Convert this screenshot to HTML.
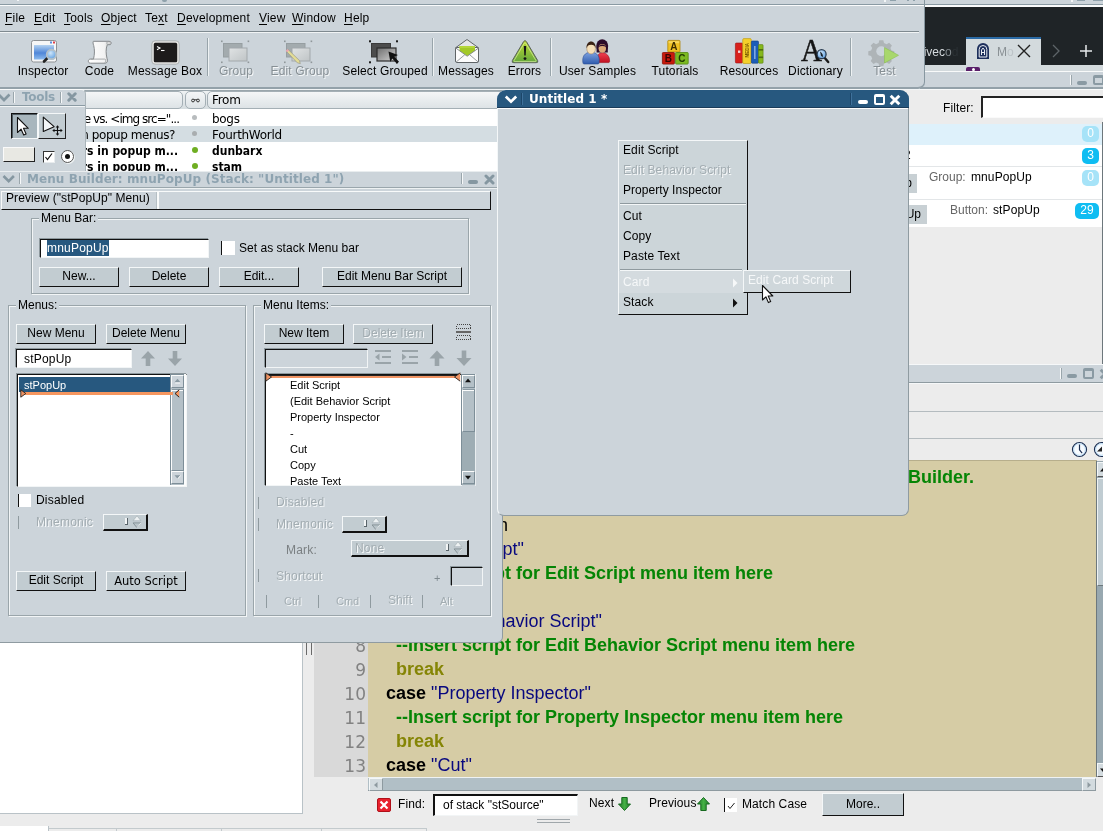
<!DOCTYPE html>
<html><head><meta charset="utf-8"><title>LiveCode</title>
<style>
*{box-sizing:border-box;margin:0;padding:0}
html,body{width:1103px;height:831px;overflow:hidden;background:#ececec;font-family:"Liberation Sans",sans-serif;font-size:12px;color:#000}
.a{position:absolute}
.dj{font-family:"DejaVu Sans",sans-serif}
.win{background:#ccd4da}
.btn{position:absolute;background:#c2ccd1;text-align:center;font-size:12px;line-height:16px;border-top:1px solid #f4f7f8;border-left:1px solid #f4f7f8;border-bottom:1px solid #111;border-right:1px solid #111;white-space:nowrap}
.opt{position:absolute;background:#c2ccd1;border-top:1px solid #f4f7f8;border-left:1px solid #f4f7f8;border-bottom:2px solid #111;border-right:2px solid #111}
.grp{position:absolute;border:1px solid #9aa5aa;box-shadow:1px 1px 0 #f2f5f6, inset 1px 1px 0 #f2f5f6}
.lbl{position:absolute;background:#ccd4da;padding:0 2px;font-size:12px;line-height:14px;white-space:nowrap}
.fld{position:absolute;background:#fff;border-top:1px solid #111;border-left:1px solid #111;border-bottom:1px solid #f2f5f6;border-right:1px solid #f2f5f6;box-shadow:-1px -1px 0 #8d989d}
.dis{color:#a3adb2;text-shadow:1px 1px 0 #f6f8f9}
.dis2{color:#868f94;text-shadow:1px 1px 0 #f6f8f9}
u{text-underline-offset:2px}
.t{position:absolute;white-space:nowrap}
</style></head><body><div id="root" style="position:absolute;left:0;top:0;width:1103px;height:831px;overflow:hidden;will-change:transform">
<!-- SECTION:BACKGROUND -->
<!-- top right: browser chrome behind -->
<div class="a" style="left:900px;top:0;width:203px;height:7px;background:#ccd4da;border-bottom:2px solid #fafbfc"></div>
<div class="a" style="left:900px;top:4px;width:203px;height:1px;background:#8a9aa3"></div>
<div class="a" style="left:1071px;top:0;width:2px;height:2px;background:#f3f6f7"></div><div class="a" style="left:1077px;top:0;width:8px;height:1px;background:#8fa1ab"></div><div class="a" style="left:1093px;top:0;width:10px;height:1px;background:#8fa1ab"></div>
<div class="a" style="left:900px;top:7px;width:203px;height:30px;background:#1f2427"></div>
<div class="a" style="left:900px;top:37px;width:203px;height:28px;background:#1f2427"></div>
<div class="t" style="left:921px;top:42px;font-size:12px;line-height:20px;color:#d5dadd">livec<span style="color:#80888c">o</span><span style="color:#2b3134">d</span></div>
<div class="a" style="left:966px;top:37px;width:75px;height:28px;background:#d3dadd;border-top:2px solid #2a6aa5"></div>
<svg class="a" style="left:976px;top:42px" width="14" height="18" viewBox="0 0 14 18"><path d="M1 17V7a6 6 0 0 1 12 0v10z" fill="#1d2f5c"/><path d="M3.2 15V7.3a3.8 3.8 0 0 1 7.6 0V15z" fill="none" stroke="#e9edf3" stroke-width="1"/><path d="M5.5 13V8l1.5-2 1.5 2v5M5.5 10.5h3" fill="none" stroke="#e9edf3" stroke-width="1"/></svg>
<div class="t" style="left:997px;top:42px;font-size:12px;line-height:20px;color:#8a9195">M<span style="color:#bcc3c7">o</span></div>
<svg class="a" style="left:1017px;top:44px" width="14" height="14" viewBox="0 0 14 14"><path d="M1 1l12 12M13 1L1 13" stroke="#222" stroke-width="1.4" fill="none"/></svg>
<svg class="a" style="left:1051px;top:43px" width="10" height="16" viewBox="0 0 10 16"><path d="M2 2l6 6-6 6" stroke="#5d6468" stroke-width="1.3" fill="none"/></svg>
<svg class="a" style="left:1079px;top:44px" width="14" height="14" viewBox="0 0 14 14"><path d="M7 1v12M1 7h12" stroke="#e6e9eb" stroke-width="1.5" fill="none"/></svg>
<div class="a" style="left:900px;top:65px;width:203px;height:6px;background:#d3dadd"></div>
<div class="a" style="left:966px;top:67px;width:14px;height:4px;background:#5a1f6a;border-radius:2px 2px 0 0"></div>
<div class="a" style="left:972px;top:68px;width:3px;height:3px;background:#fff;border-radius:2px"></div>
<!-- project browser title bar (inactive) -->
<div class="a" style="left:900px;top:71px;width:203px;height:18px;background:#ccd4da;border-top:1px solid #f8fafa;border-bottom:2px solid #93a1a9"></div>
<div class="a" style="left:900px;top:89px;width:203px;height:1px;background:#f8fafa"></div>
<div class="a" style="left:1070px;top:75px;width:2px;height:10px;background:#f6f8f9;border-right:1px solid #9aa6ac"></div>
<div class="a" style="left:1077px;top:81px;width:10px;height:4px;background:#8a9aa3;border-radius:2px"></div>
<div class="a" style="left:1093px;top:75px;width:11px;height:10px;border:2px solid #8a9aa3;border-top-width:3px;border-radius:2px"></div>
<!-- bottom-left panel -->
<div class="a" style="left:0;top:640px;width:303px;height:174px;background:#fff;border-right:1px solid #b9c2c7;border-bottom:1px solid #b9c2c7"></div>
<div class="a" style="left:0;top:826px;width:49px;height:5px;background:#fff;border-right:1px solid #b9c2c7"></div>
<div class="a" style="left:49px;top:828px;width:68px;height:3px;border-top:1px solid #c3cacd;border-right:1px solid #c3cacd"></div>
<div class="a" style="left:117px;top:828px;width:105px;height:3px;border-top:1px solid #c3cacd;border-right:1px solid #c3cacd"></div>
<div class="a" style="left:222px;top:828px;width:100px;height:3px;border-top:1px solid #c3cacd;border-right:1px solid #c3cacd"></div>
<div class="a" style="left:322px;top:828px;width:105px;height:3px;border-top:1px solid #c3cacd;border-right:1px solid #c3cacd"></div>
<!-- SECTION:MAIL -->
<div class="a" style="left:0;top:87px;width:920px;height:3px;background:#f3f6f7"></div>
<div class="a dj" style="left:0;top:89px;width:520px;height:83px;background:#fff;font-size:11.4px;overflow:hidden">
 <div class="a" style="left:0;top:0;width:520px;height:20px;background:linear-gradient(#f1f4f5,#d6dde0)"></div>
 <div class="a" style="left:0;top:1px;width:520px;height:1px;background:#9aa6ac"></div>
 <div class="a" style="left:0;top:2px;width:183px;height:18px;border:1px solid #a4afb5;border-radius:5px;background:linear-gradient(#f4f6f7,#dde3e6)"></div>
 <div class="a" style="left:185px;top:2px;width:21px;height:18px;border:1px solid #a4afb5;border-radius:5px;background:linear-gradient(#f4f6f7,#dde3e6)"></div>
 <svg class="a" style="left:191px;top:9px" width="9" height="5" viewBox="0 0 9 5"><circle cx="2" cy="2.500" r="1.400" fill="none" stroke="#333" stroke-width="1"/><circle cx="7" cy="2.500" r="1.400" fill="none" stroke="#333" stroke-width="1"/><path d="M3 1.800h3" stroke="#333" stroke-width="1"/></svg>
 <div class="a" style="left:207px;top:2px;width:330px;height:18px;border:1px solid #a4afb5;border-radius:5px;background:linear-gradient(#f4f6f7,#dde3e6)"></div>
 <div class="t" style="left:212px;top:4px;font-size:12px;line-height:15px;letter-spacing:-.3px">From</div>
 <div class="a" style="left:0;top:37px;width:520px;height:16px;background:#d4dde2"></div>
 <div class="t" style="right:341px;top:22px;line-height:16px;font-size:12px;letter-spacing:-.95px">image vs. &lt;img src="...</div>
 <div class="t" style="right:345px;top:38px;line-height:16px;font-size:12px;letter-spacing:-.45px">in popup menus?</div>
 <div class="t" style="right:342px;top:54px;line-height:16px;font-size:12px;font-weight:bold;font-family:'DejaVu Sans Condensed','DejaVu Sans',sans-serif">rs in popup m...</div>
 <div class="t" style="right:342px;top:70px;line-height:16px;font-size:12px;font-weight:bold;font-family:'DejaVu Sans Condensed','DejaVu Sans',sans-serif">rs in popup m...</div>
 <div class="a" style="left:192px;top:26px;width:5px;height:5px;border-radius:3px;background:#b8bcbe"></div>
 <div class="a" style="left:192px;top:42px;width:5px;height:5px;border-radius:3px;background:#a9adaf"></div>
 <div class="a" style="left:192px;top:58px;width:6px;height:6px;border-radius:3px;background:#6fae22"></div>
 <div class="a" style="left:192px;top:74px;width:6px;height:6px;border-radius:3px;background:#6fae22"></div>
 <div class="t" style="left:212px;top:22px;line-height:16px;font-size:12px;letter-spacing:-.3px">bogs</div>
 <div class="t" style="left:212px;top:38px;line-height:16px;font-size:12px;letter-spacing:-.3px">FourthWorld</div>
 <div class="t" style="left:212px;top:54px;line-height:16px;font-size:12px;font-weight:bold;font-family:'DejaVu Sans Condensed','DejaVu Sans',sans-serif">dunbarx</div>
 <div class="t" style="left:212px;top:70px;line-height:16px;font-size:12px;font-weight:bold;font-family:'DejaVu Sans Condensed','DejaVu Sans',sans-serif">stam</div>
</div>
<!-- SECTION:BROWSER -->
<div class="a" style="left:900px;top:90px;width:203px;height:275px;background:#ececec"></div>
<div class="t" style="left:943px;top:101px;font-size:12px;line-height:14px;letter-spacing:.1px">Filter:</div>
<div class="a" style="left:981px;top:96px;width:130px;height:22px;background:#fff;border-top:2px solid #222;border-left:2px solid #222;border-bottom:1px solid #fafafa"></div>
<div class="a" style="left:900px;top:124px;width:202px;height:21px;background:#def1fb"></div>
<div class="a" style="left:900px;top:145px;width:202px;height:82px;background:#fff"></div>
<div class="a" style="left:900px;top:166px;width:202px;height:1px;background:#e3e6e8"></div>
<div class="a" style="left:900px;top:199px;width:202px;height:1px;background:#e3e6e8"></div>
<div class="a" style="left:1102px;top:122px;width:1px;height:243px;background:#6d777c"></div>
<div class="a" style="left:1082px;top:126px;width:17px;height:16px;border-radius:5px;background:#a6e3f8;color:#fff;font-size:12px;line-height:15px;text-align:center">0</div>
<div class="a" style="left:1082px;top:148px;width:17px;height:16px;border-radius:5px;background:#0fbdf2;color:#fff;font-size:12px;line-height:15px;text-align:center">3</div>
<div class="a" style="left:1082px;top:170px;width:17px;height:16px;border-radius:5px;background:#a6e3f8;color:#fff;font-size:12px;line-height:15px;text-align:center">0</div>
<div class="a" style="left:1075px;top:203px;width:24px;height:16px;border-radius:5px;background:#0fbdf2;color:#fff;font-size:12px;line-height:15px;text-align:center">29</div>
<div class="t" style="left:929px;top:170px;line-height:14px;color:#666">Group:</div>
<div class="t" style="left:971px;top:170px;line-height:14px;letter-spacing:.1px">mnuPopUp</div>
<div class="t" style="left:950px;top:203px;line-height:14px;color:#666">Button:</div>
<div class="t" style="left:993px;top:203px;line-height:14px;letter-spacing:.1px">stPopUp</div>
<div class="a" style="left:900px;top:174px;width:17px;height:19px;background:#c8d0d4;overflow:hidden"><div class="t" style="right:5px;top:2px;line-height:14px;font-size:12px">p</div></div>
<div class="a" style="left:900px;top:205px;width:27px;height:19px;background:#c8d0d4;overflow:hidden"><div class="t" style="right:6px;top:2px;line-height:14px;font-size:12px">Up</div></div>
<div class="t" style="left:904px;top:148px;line-height:14px;font-size:12px">2</div>
<!-- SECTION:EDITOR -->
<style>
.ln{position:absolute;left:314px;width:52px;text-align:right;font-family:"DejaVu Sans",sans-serif;font-size:17px;line-height:24px;color:#828282}
.cl{position:absolute;white-space:pre;font-size:18px;line-height:24px;color:#000}
.cl .c{color:#058505;font-weight:bold}.cl .s{color:#08087f}.cl .k{color:#858505;font-weight:bold}
</style>
<!-- editor title bar (inactive) -->
<div class="a" style="left:900px;top:364px;width:203px;height:19px;background:#ccd4da;border-top:1px solid #f6f8f9;border-bottom:1px solid #8f9ba1"></div>
<div class="a" style="left:1060px;top:368px;width:2px;height:11px;background:#f6f8f9;border-right:1px solid #9aa6ac"></div>
<div class="a" style="left:1067px;top:374px;width:10px;height:4px;background:#8a9aa3;border-radius:2px"></div>
<div class="a" style="left:1083px;top:368px;width:11px;height:11px;border:2px solid #8a9aa3;border-top-width:3px;border-radius:2px"></div>
<svg class="a" style="left:1099px;top:368px" width="5" height="12" viewBox="0 0 5 12"><path d="M1.700 1.700l8.600 8.600M10.300 1.700l-8.600 8.600" stroke="#8a9aa3" stroke-width="2.900" fill="none"/></svg>
<div class="a" style="left:900px;top:383px;width:203px;height:1px;background:#f6f8f9"></div>
<div class="a" style="left:900px;top:411px;width:203px;height:1px;background:#b4bbbf"></div>
<div class="a" style="left:900px;top:438px;width:203px;height:1px;background:#b4bbbf"></div>
<!-- clock icons -->
<svg class="a" style="left:1071px;top:441px" width="32" height="18" viewBox="0 0 32 18"><circle cx="8.500" cy="8.500" r="7" fill="#f7fbff" stroke="#1c2f52" stroke-width="1.200"/><circle cx="8.500" cy="8.500" r="5.800" fill="none" stroke="#b9dcf6" stroke-width="1"/><path d="M8.500 3.500v5.300l2.600 3.400" fill="none" stroke="#1c2f52" stroke-width="1.200"/><circle cx="30.500" cy="8.500" r="7" fill="#f7fbff" stroke="#1c2f52" stroke-width="1.200"/><circle cx="30.500" cy="8.500" r="5.800" fill="none" stroke="#b9dcf6" stroke-width="1"/><path d="M26 10.500l5-5v5z" fill="#222"/></svg>
<!-- gutter + code -->
<div class="a" style="left:306px;top:643px;width:1px;height:12px;background:#6a6a6a"></div><div class="a" style="left:311px;top:643px;width:1px;height:12px;background:#6a6a6a"></div>
<div class="a" style="left:314px;top:460px;width:54px;height:317px;background:#d9d9d9"></div>
<div class="a" style="left:368px;top:460px;width:729px;height:317px;background:#d6cca5;border-top:1px solid #b7ae8c"></div>
<div class="ln" style="top:466px">1</div><div class="cl" style="right:129px;top:465px"><span class="c">--The following menuPick handler was generated by the Menu Builder.</span></div>
<div class="ln" style="top:490px">2</div><div class="cl" style="left:376px;top:489px"><b>on</b> menuPick pWhich</div>
<div class="ln" style="top:514px">3</div><div class="cl" style="right:595px;top:513px"><b>switch</b> pWhic<span>h</span></div>
<div class="ln" style="top:538px">4</div><div class="cl" style="left:384px;top:537px"><b>case</b> <span class="s">"Edit Script"</span></div>
<div class="ln" style="top:562px">5</div><div class="cl" style="left:396px;top:561px"><span class="c">--Insert script for Edit Script menu item here</span></div>
<div class="ln" style="top:586px">6</div><div class="cl" style="left:396px;top:585px"><span class="k">break</span></div>
<div class="ln" style="top:610px">7</div><div class="cl" style="left:386px;top:609px"><b>case</b> <span class="s">"Edit Behavior Script"</span></div>
<div class="ln" style="top:634px">8</div><div class="cl" style="left:396px;top:633px"><span class="c">--Insert script for Edit Behavior Script menu item here</span></div>
<div class="ln" style="top:658px">9</div><div class="cl" style="left:396px;top:657px"><span class="k">break</span></div>
<div class="ln" style="top:682px">10</div><div class="cl" style="left:386px;top:681px"><b>case</b> <span class="s">"Property Inspector"</span></div>
<div class="ln" style="top:706px">11</div><div class="cl" style="left:396px;top:705px"><span class="c">--Insert script for Property Inspector menu item here</span></div>
<div class="ln" style="top:730px">12</div><div class="cl" style="left:396px;top:729px"><span class="k">break</span></div>
<div class="ln" style="top:754px">13</div><div class="cl" style="left:386px;top:753px"><b>case</b> <span class="s">"Cut"</span></div>
<!-- v scrollbar -->
<div class="a" style="left:1096px;top:461px;width:7px;height:316px;background:#98a8b0;border-left:1px solid #6d787d"></div>
<div class="a" style="left:1097px;top:462px;width:7px;height:15px;background:#d3dbdf;border:1px solid #f4f7f8;border-bottom-color:#555"></div>
<svg class="a" style="left:1099px;top:467px" width="4" height="6" viewBox="0 0 4 6"><path d="M4 1l3 3.500h-6z" fill="#111"/></svg>
<div class="a" style="left:1097px;top:478px;width:7px;height:108px;background:#c0ccd2;border:1px solid #eef2f3;border-bottom-color:#6d787d"></div>
<div class="a" style="left:1097px;top:763px;width:7px;height:14px;background:#d3dbdf;border:1px solid #f4f7f8;border-bottom-color:#555"></div>
<svg class="a" style="left:1099px;top:767px" width="4" height="6" viewBox="0 0 4 6"><path d="M4 5l3-3.500h-6z" fill="#111"/></svg>
<!-- h scrollbar -->
<div class="a" style="left:368px;top:777px;width:728px;height:14px;background:#b1bfc6;border-top:1px solid #eef2f3;border-bottom:1px solid #8e9aa0"></div>
<div class="a" style="left:369px;top:778px;width:14px;height:13px;background:#d3dbdf;border:1px solid #f4f7f8;border-right-color:#8e9aa0;border-bottom-color:#8e9aa0"></div>
<svg class="a" style="left:373px;top:781px" width="6" height="8" viewBox="0 0 6 8"><path d="M1 4l3.500-3v6z" fill="#8e9aa0"/></svg>
<div class="a" style="left:1082px;top:778px;width:14px;height:13px;background:#d3dbdf;border:1px solid #f4f7f8;border-right-color:#8e9aa0;border-bottom-color:#8e9aa0"></div>
<svg class="a" style="left:1086px;top:781px" width="6" height="8" viewBox="0 0 6 8"><path d="M5 4l-3.500-3v6z" fill="#8e9aa0"/></svg>
<!-- find bar -->
<div class="a" style="left:377px;top:798px;width:14px;height:14px;background:#e8212d;border-radius:2px;border:1px solid #b01019"></div>
<svg class="a" style="left:379px;top:800px" width="10" height="10" viewBox="0 0 10 10"><path d="M1.500 1.500l7 7M8.500 1.500l-7 7" stroke="#fff" stroke-width="2.200" fill="none"/></svg>
<div class="t" style="left:398px;top:797px;line-height:14px;letter-spacing:.1px">Find:</div>
<div class="fld" style="left:433px;top:794px;width:145px;height:22px;border-top-width:2px;border-left-width:2px;box-shadow:none"></div>
<div class="t" style="left:443px;top:798px;line-height:14px">of stack "stSource"</div>
<div class="t" style="left:589px;top:796px;line-height:14px;letter-spacing:.1px">Next</div>
<svg class="a" style="left:617px;top:796px" width="15" height="16" viewBox="0 0 15 16"><defs><linearGradient id="gar" x1="0" y1="0" x2="1" y2="0"><stop offset="0" stop-color="#1f7a28"/><stop offset=".5" stop-color="#45b045"/><stop offset="1" stop-color="#1f7a28"/></linearGradient></defs><path d="M7.500 14.500l6-6.500h-3.300v-6.500h-5.400v6.500h-3.300z" fill="url(#gar)" stroke="#176a20" stroke-width="1" stroke-linejoin="round"/></svg>
<div class="t" style="left:649px;top:796px;line-height:14px;letter-spacing:.1px">Previous</div>
<svg class="a" style="left:696px;top:796px" width="15" height="16" viewBox="0 0 15 16"><path d="M7.500 1.500l6 6.500h-3.300v6.500h-5.400v-6.500h-3.300z" fill="url(#gar)" stroke="#176a20" stroke-width="1" stroke-linejoin="round"/></svg>
<div class="a" style="left:724px;top:798px;width:13px;height:14px;background:#fff;border-left:1px solid #111"></div>
<svg class="a" style="left:727px;top:801px" width="9" height="9" viewBox="0 0 9 9"><path d="M1 5l2 2.500 4.500-5.500" stroke="#222" stroke-width="1" fill="none"/></svg>
<div class="t" style="left:742px;top:797px;line-height:14px;letter-spacing:.1px">Match Case</div>
<div class="btn" style="left:822px;top:793px;width:82px;height:23px;line-height:20px">More..</div>
<div class="a" style="left:537px;top:819px;width:33px;height:1px;background:#a0a7ab"></div><div class="a" style="left:537px;top:822px;width:33px;height:1px;background:#a0a7ab"></div>
<!-- SECTION:MENUBAR -->
<div class="a win" style="left:0;top:0;width:925px;height:89px;border-radius:0 0 7px 0;border-right:1px solid #8797a0;border-bottom:2px solid #93a1a9"></div>
<div class="a" style="left:0;top:4px;width:924px;height:1px;background:#8a9aa3"></div>
<div class="a" style="left:0;top:5px;width:924px;height:1px;background:#fafbfc"></div>
<div class="a" style="left:162px;top:0;width:5px;height:2px;background:#8fa1ab;border-radius:0 0 3px 3px"></div>
<div class="a" style="left:17px;top:0;width:2px;height:1px;background:#f3f6f7"></div>
<div class="a" style="left:884px;top:0;width:2px;height:2px;background:#f3f6f7"></div>
<div class="a" style="left:890px;top:0;width:6px;height:1px;background:#8fa1ab"></div>
<div class="a" style="left:907px;top:0;width:2px;height:1px;background:#8fa1ab"></div>
<div class="a" style="left:913px;top:0;width:2px;height:1px;background:#8fa1ab"></div>
<div class="a" style="left:0;top:31px;width:919px;height:1px;background:#7f8a90"></div>
<div class="a" style="left:0;top:32px;width:919px;height:1px;background:#f1f4f5"></div>
<div class="t" style="left:5px;top:11px;line-height:14px;letter-spacing:.2px"><u>F</u>ile</div>
<div class="t" style="left:34px;top:11px;line-height:14px;letter-spacing:.2px"><u>E</u>dit</div>
<div class="t" style="left:64px;top:11px;line-height:14px;letter-spacing:.2px"><u>T</u>ools</div>
<div class="t" style="left:101px;top:11px;line-height:14px;letter-spacing:.2px"><u>O</u>bject</div>
<div class="t" style="left:145px;top:11px;line-height:14px;letter-spacing:.2px">Te<u>x</u>t</div>
<div class="t" style="left:177px;top:11px;line-height:14px;letter-spacing:.2px"><u>D</u>evelopment</div>
<div class="t" style="left:259px;top:11px;line-height:14px;letter-spacing:.2px"><u>V</u>iew</div>
<div class="t" style="left:292px;top:11px;line-height:14px;letter-spacing:.2px"><u>W</u>indow</div>
<div class="t" style="left:344px;top:11px;line-height:14px;letter-spacing:.2px"><u>H</u>elp</div>
<div class="a" style="left:207px;top:38px;width:1px;height:38px;background:#98a4aa"></div><div class="a" style="left:208px;top:38px;width:1px;height:38px;background:#eef2f3"></div>
<div class="a" style="left:432px;top:38px;width:1px;height:38px;background:#98a4aa"></div><div class="a" style="left:433px;top:38px;width:1px;height:38px;background:#eef2f3"></div>
<div class="a" style="left:550px;top:38px;width:1px;height:38px;background:#98a4aa"></div><div class="a" style="left:551px;top:38px;width:1px;height:38px;background:#eef2f3"></div>
<div class="a" style="left:850px;top:38px;width:1px;height:38px;background:#98a4aa"></div><div class="a" style="left:851px;top:38px;width:1px;height:38px;background:#eef2f3"></div>
<div class="t" style="left:-17px;width:120px;text-align:center;top:64px;line-height:14px;letter-spacing:.15px">Inspector</div>
<div class="t" style="left:39.5px;width:120px;text-align:center;top:64px;line-height:14px;letter-spacing:.15px">Code</div>
<div class="t" style="left:105px;width:120px;text-align:center;top:64px;line-height:14px;letter-spacing:.15px">Message Box</div>
<div class="t dis2" style="left:176px;width:120px;text-align:center;top:64px;line-height:14px;letter-spacing:.15px">Group</div>
<div class="t dis2" style="left:240px;width:120px;text-align:center;top:64px;line-height:14px;letter-spacing:.15px">Edit Group</div>
<div class="t" style="left:325px;width:120px;text-align:center;top:64px;line-height:14px;letter-spacing:.15px">Select Grouped</div>
<div class="t" style="left:406px;width:120px;text-align:center;top:64px;line-height:14px;letter-spacing:.15px">Messages</div>
<div class="t" style="left:464.5px;width:120px;text-align:center;top:64px;line-height:14px;letter-spacing:.15px">Errors</div>
<div class="t" style="left:537.5px;width:120px;text-align:center;top:64px;line-height:14px;letter-spacing:.15px">User Samples</div>
<div class="t" style="left:615px;width:120px;text-align:center;top:64px;line-height:14px;letter-spacing:.15px">Tutorials</div>
<div class="t" style="left:689px;width:120px;text-align:center;top:64px;line-height:14px;letter-spacing:.15px">Resources</div>
<div class="t" style="left:755.5px;width:120px;text-align:center;top:64px;line-height:14px;letter-spacing:.15px">Dictionary</div>
<div class="t dis2" style="left:824.5px;width:120px;text-align:center;top:64px;line-height:14px;letter-spacing:.15px">Test</div>
<!-- ICONS -->
<svg class="a" style="left:0;top:36px" width="924" height="30" viewBox="0 36 924 30">
<defs>
<linearGradient id="gi1" x1="0" y1="0" x2="0" y2="1"><stop offset="0" stop-color="#b4d2f0"/><stop offset=".55" stop-color="#4f86d8"/><stop offset="1" stop-color="#8dbbee"/></linearGradient>
<linearGradient id="gsc" x1="0" y1="0" x2="1" y2="0"><stop offset="0" stop-color="#fff"/><stop offset=".7" stop-color="#f2f2f2"/><stop offset="1" stop-color="#c9c9c9"/></linearGradient>
<linearGradient id="ggr" x1="0" y1="0" x2="1" y2="1"><stop offset="0" stop-color="#e0e3e4"/><stop offset="1" stop-color="#bfc4c6"/></linearGradient>
<linearGradient id="ggd" x1="0" y1="0" x2="1" y2="1"><stop offset="0" stop-color="#6e6e6e"/><stop offset="1" stop-color="#d2d2d2"/></linearGradient>
<linearGradient id="gtr" x1="0" y1="0" x2="0" y2="1"><stop offset="0" stop-color="#bfdc30"/><stop offset="1" stop-color="#62a63c"/></linearGradient>
<linearGradient id="gbl" x1="0" y1="0" x2="0" y2="1"><stop offset="0" stop-color="#7ea2e0"/><stop offset="1" stop-color="#2f5cae"/></linearGradient>
<linearGradient id="grd" x1="0" y1="0" x2="0" y2="1"><stop offset="0" stop-color="#f04050"/><stop offset="1" stop-color="#c01020"/></linearGradient>
<radialGradient id="gmg" cx=".4" cy=".35" r=".7"><stop offset="0" stop-color="#cfe6fa"/><stop offset="1" stop-color="#5d9ee0"/></radialGradient>
</defs>
<!-- Inspector -->
<rect x="31.5" y="40.5" width="25" height="21.500" rx="2" fill="#f6f6f6" stroke="#8d9194" stroke-width="1"/>
<rect x="34" y="45" width="20" height="14.500" fill="url(#gi1)"/>
<rect x="50" y="41.500" width="2" height="2" fill="#5b8fe0"/><rect x="53" y="41.500" width="2" height="2" fill="#e0404a"/>
<path d="M47.500 58l-3.500 3.500" stroke="#222" stroke-width="2.600" stroke-linecap="round"/>
<circle cx="51.500" cy="54.400" r="4.700" fill="url(#gmg)" stroke="#b4c0c8" stroke-width="1.900"/>
<!-- Code scroll -->
<path d="M93.300 41.300h15.800c2.300 0 2.700 2.200 1.200 3.400h-3c-1.700 4.300-1.300 9.300-.3 13.600 1.200 2.800.2 4.900-2 4.900h-14.500c-2.900 0-2.900-4.100 0-4.100h3c1.200-5 1.200-9.500.2-13.600-.8-1.900-.8-3.600-.4-4.200z" fill="url(#gsc)" stroke="#85898c" stroke-width="1"/>
<path d="M90.500 59.100h14.200c1.300 0 1.300 2.200.2 3.600" stroke="#9da1a4" stroke-width=".9" fill="none"/>
<path d="M107.200 44.600c-.6-1.300-.4-2.600.6-3.200" stroke="#9da1a4" stroke-width=".9" fill="none"/>
<!-- Message Box -->
<rect x="152.800" y="41.800" width="25.400" height="21.400" rx="2.500" fill="#1d1b1b" stroke="#e4e4e2" stroke-width="2"/>
<rect x="151.800" y="40.800" width="27.400" height="23.400" rx="3.300" fill="none" stroke="#9b9fa1" stroke-width=".7"/>
<path d="M157 46.500l3 1.600-3 1.600" stroke="#fff" stroke-width="1.100" fill="none"/><path d="M161 50.500h3.500" stroke="#fff" stroke-width="1.100"/>
<!-- Group (disabled) -->
<g fill="#8f979a"><rect x="221" y="40.500" width="1.600" height="1.600"/><rect x="247.600" y="40.500" width="1.600" height="1.600"/><rect x="221" y="61.500" width="1.600" height="1.600"/><rect x="247.600" y="61.500" width="1.600" height="1.600"/></g>
<rect x="223.500" y="43.500" width="18.500" height="13.500" fill="#a3abae" stroke="#969ea1" stroke-width="1"/>
<rect x="229" y="48" width="18" height="13" fill="url(#ggr)" stroke="#a2a8ab" stroke-width="1"/>
<!-- Edit Group (disabled) -->
<g fill="#8f979a"><rect x="284" y="40.500" width="1.600" height="1.600"/><rect x="310.600" y="40.500" width="1.600" height="1.600"/><rect x="284" y="61.500" width="1.600" height="1.600"/><rect x="310.600" y="61.500" width="1.600" height="1.600"/></g>
<rect x="286.500" y="43.500" width="18.500" height="13.500" fill="#a3abae" stroke="#969ea1" stroke-width="1"/>
<rect x="292" y="48" width="18" height="13" fill="url(#ggr)" stroke="#a2a8ab" stroke-width="1"/>
<path d="M286 51l2-1.600 11.500 11.200 0.800 3-3-0.800z" fill="#e3dc95" stroke="#9a9a86" stroke-width=".7"/>
<path d="M285.700 50.800l1.800-1.700 1.500 1.500-1.900 1.700z" fill="#eaa6b4"/>
<!-- Select Grouped -->
<g fill="#1c1c1c"><rect x="369" y="40.300" width="2" height="2"/><rect x="396" y="40.300" width="2" height="2"/><rect x="369" y="61.300" width="2" height="2"/><rect x="396" y="61.300" width="2" height="2"/></g>
<rect x="371.500" y="43.500" width="19" height="13.500" fill="#4c4c4c" stroke="#3a3a3a" stroke-width="1"/>
<rect x="377" y="48" width="19" height="13" fill="url(#ggd)" stroke="#2c2c2c" stroke-width="1.200"/>
<path d="M388.500 51.500l9.500 3.500-3.600 1.700 4.600 5-2.200 2-4.500-5.200-2 3.600z" fill="#111"/>
<!-- Messages -->
<path d="M455.500 47.800l11.500-8.300 11.500 8.300z" fill="#e6e7e7" stroke="#5f6467" stroke-width="1" stroke-linejoin="round"/>
<rect x="455.500" y="47.500" width="23" height="15" rx="1.500" fill="#fcfcfc" stroke="#5f6467" stroke-width="1"/>
<path d="M459.500 46h15.500v4.800l-7.800 5.200-7.700-5.200z" fill="#a3c928"/>
<path d="M459.500 46h15.500v2h-15.500z" fill="#b4d63a"/>
<path d="M456 48.200l11.200 8 11.200-8" fill="none" stroke="#7d8285" stroke-width=".9"/>
<path d="M456.200 62l8.600-7.300M478.200 62l-8.600-7.300" fill="none" stroke="#8d9295" stroke-width=".9"/>
<!-- Errors -->
<path d="M523.600 41.600q1.400-2 2.800 0l11.200 18.800q1 2.300-1.400 2.300h-22.400q-2.400 0-1.400-2.300z" fill="url(#gtr)" stroke="#5a5f5c" stroke-width="1" stroke-linejoin="round"/>
<path d="M524.300 43.200q.7-1 1.400 0l10.300 17.400q.4 1-.7 1h-20.600q-1.100 0-.7-1z" fill="none" stroke="#dff0a8" stroke-width=".8" opacity=".85"/>
<path d="M523.800 46h2.400l-.5 9.500h-1.400z" fill="#151515"/><circle cx="525" cy="58.600" r="1.450" fill="#151515"/>
<!-- User Samples -->
<ellipse cx="602.200" cy="45.900" rx="6" ry="6.600" fill="#2c0c2a"/>
<path d="M596.600 47h11.200v5.500h-11.200z" fill="#2c0c2a"/>
<path d="M596.800 62.600c-.6-5.600 1.200-9.800 5.600-9.800 4.500 0 7.200 3.600 7.200 8.400 0 1-.5 1.400-1.400 1.400z" fill="url(#grd)" stroke="#9a0d18" stroke-width=".6"/>
<ellipse cx="602.300" cy="48.300" rx="3.700" ry="4.400" fill="#dba978"/>
<path d="M598.300 47.200c1.400-3.600 6.600-3.600 8 0-2.200-1.600-5.800-1.600-8 0z" fill="#2c0c2a"/>
<path d="M583 63.200c-1.300-6.600 1.800-11 8-11s9.300 4.400 8 11c-.2.600-.6.800-1.200.8h-13.600c-.6 0-1-.2-1.200-.8z" fill="url(#gbl)" stroke="#2a4e94" stroke-width=".6"/>
<ellipse cx="591.100" cy="48.600" rx="4.300" ry="5.400" fill="#f6dfb8" stroke="#9a7a55" stroke-width=".5"/>
<path d="M586.600 48.200c-.8-9 9.800-9 9 0-.8-2.800-1.900-3.400-4.500-3.400s-3.700.6-4.500 3.400z" fill="#3a2214"/>
<!-- Tutorials -->
<rect x="667.800" y="40.400" width="12.200" height="11.600" rx=".8" fill="#f0c224" stroke="#b08608" stroke-width=".8"/>
<rect x="668.600" y="41.200" width="10.600" height="2" fill="#f8dc6a" opacity=".8"/>
<rect x="662.400" y="52.500" width="12" height="11.600" rx=".8" fill="#c81a0c" stroke="#8a1006" stroke-width=".8"/>
<rect x="675.600" y="52.500" width="12.600" height="11.600" rx=".8" fill="#7cba22" stroke="#528810" stroke-width=".8"/>
<text x="673.900" y="50" font-family="Liberation Sans,sans-serif" font-weight="bold" font-size="10" text-anchor="middle" fill="#3c2c00">A</text>
<text x="668.400" y="62" font-family="Liberation Sans,sans-serif" font-weight="bold" font-size="10" text-anchor="middle" fill="#3a0400">B</text>
<text x="681.900" y="62" font-family="Liberation Sans,sans-serif" font-weight="bold" font-size="10" text-anchor="middle" fill="#203c00">C</text>
<!-- Resources -->
<rect x="735.400" y="43" width="7.300" height="20" rx="1" fill="#d8201c" stroke="#9c1210" stroke-width=".6"/>
<rect x="738" y="50.500" width="2.400" height="2.400" fill="#f4d4d4"/>
<rect x="742.700" y="38.600" width="8.600" height="24.900" rx="1.200" fill="#f4cf2a" stroke="#b8960c" stroke-width=".6"/>
<text transform="translate(749.300,57.500) rotate(-90)" font-family="Liberation Sans,sans-serif" font-weight="bold" font-size="4.500" fill="#7a5a00">MEDIA</text>
<rect x="751.300" y="41" width="7.200" height="22.200" rx="1" fill="#1c5cb8" stroke="#103c80" stroke-width=".6"/>
<rect x="754" y="46" width="1.600" height="13" fill="#7fa8e0"/>
<rect x="758.500" y="44.600" width="4.600" height="18.600" rx=".8" fill="#86b81c" stroke="#5a8010" stroke-width=".6"/>
<rect x="758.500" y="49" width="4.600" height="1.600" fill="#4d6e0c"/><rect x="758.500" y="56.500" width="4.600" height="1.600" fill="#4d6e0c"/>
<!-- Dictionary -->
<text x="801" y="61.300" font-family="Liberation Serif,serif" font-size="31" fill="#151515" stroke="#151515" stroke-width=".5" textLength="21" lengthAdjust="spacingAndGlyphs">A</text>
<path d="M824.800 58l3.400 4" stroke="#1a1a1a" stroke-width="2.400" stroke-linecap="round"/>
<circle cx="821.600" cy="54.200" r="4.500" fill="url(#gmg)" stroke="#2a3c50" stroke-width="1.300"/>
<path d="M820 51.500c2 1 3 3 3 5.500l-2-1z" fill="#16222e"/>
<!-- Test (disabled) -->
<g transform="translate(881.300,51.300)" fill="#aeb4b7">
<path d="M-2-11h4l.7 2.800 2.600 1.100 2.500-1.500 2.800 2.800-1.500 2.500 1.100 2.600 2.800.7v4l-2.800.7-1.100 2.600 1.500 2.500-2.800 2.800-2.500-1.500-2.600 1.100-.7 2.800h-4l-.7-2.800-2.600-1.100-2.500 1.500-2.800-2.800 1.500-2.500-1.100-2.600-2.800-.7v-4l2.800-.7 1.100-2.600-1.500-2.500 2.800-2.800 2.500 1.500 2.600-1.100z"/>
<circle r="5" fill="#ccd4da"/></g>
<path d="M884.500 47.600l14 7.700-14 7.700z" fill="#a8d76c" stroke="#8cc050" stroke-width=".6"/>
</svg>
<!-- SECTION:TOOLS -->
<div class="a win" style="left:0;top:89px;width:86px;height:82px;border-radius:0 5px 0 0;border-right:1px solid #aab4b9;border-top:1px solid #f8fafa"></div>
<div class="a" style="left:0;top:105px;width:85px;height:1px;background:#8a9aa3"></div>
<div class="a" style="left:0;top:106px;width:85px;height:1px;background:#f1f4f5"></div>
<svg class="a" style="left:0;top:93px" width="11" height="10" viewBox="0 0 11 10"><path d="M-1.500 1.500l5.500 5.500 5.500-5.500" stroke="#8597a1" stroke-width="2.700" fill="none"/></svg>
<div class="a" style="left:13px;top:92px;width:2px;height:11px;background:#f6f8f9;border-left:1px solid #9aa6ac"></div>
<div class="t dj" style="left:22px;top:89px;font-weight:bold;font-size:12px;line-height:16px;color:#8ea3b0;letter-spacing:-.3px">Tools</div>
<div class="a" style="left:60px;top:92px;width:2px;height:11px;background:#f6f8f9;border-left:1px solid #9aa6ac"></div>
<svg class="a" style="left:67px;top:92px" width="10" height="10" viewBox="0 0 10 10"><path d="M1.800 1.800l6.400 6.400M8.200 1.800l-6.400 6.400" stroke="#8597a1" stroke-width="3" stroke-linecap="round" fill="none"/></svg>
<!-- pointer buttons -->
<div class="a" style="left:11px;top:113px;width:27px;height:26px;background:#a8b6bd;border-top:1px solid #111;border-left:1px solid #111;border-right:1px solid #f4f7f8;border-bottom:1px solid #f4f7f8;box-shadow:inset 1px 1px 0 #4f5a60"></div>
<div class="a" style="left:38px;top:113px;width:28px;height:26px;background:#c2ccd1;border-top:1px solid #f4f7f8;border-left:1px solid #f4f7f8;border-right:1px solid #222;border-bottom:1px solid #222"></div>
<svg class="a" style="left:15px;top:116px" width="20" height="22" viewBox="0 0 20 22"><path d="M2.500 1.500v15l3.600-3.300 2.600 5.800 2.400-1.100-2.600-5.600h4.800z" fill="#fff" stroke="#111" stroke-width="1.100" stroke-linejoin="round"/></svg>
<svg class="a" style="left:41px;top:114px" width="24" height="24" viewBox="41 114 24 24"><path d="M43.300 117.200v14.300l10.800-4.800z" fill="#f4f6f7" stroke="#111" stroke-width="1.100" stroke-linejoin="round"/><path d="M57.500 126.500v8M53.500 130.500h8" stroke="#111" stroke-width="1.100"/><path d="M57.500 125.300l-1.800 2.200h3.600zM57.500 135.700l-1.800-2.200h3.600zM52.300 130.500l2.200-1.800v3.600zM62.700 130.500l-2.200-1.800v3.600z" fill="#111"/><circle cx="57.500" cy="130.500" r="3.300" fill="none" stroke="#f4f6f7" stroke-width="0"/></svg>
<div class="a" style="left:3px;top:147px;width:32px;height:15px;background:#e8e8e3;border-right:1px solid #222;border-bottom:1px solid #222;border-top:1px solid #fafafa;border-left:1px solid #fafafa"></div>
<div class="a" style="left:43px;top:151px;width:12px;height:12px;background:#fff;border-top:1px solid #333;border-left:1px solid #333;border-right:1px solid #e8ecee;border-bottom:1px solid #e8ecee"></div>
<svg class="a" style="left:44px;top:152px" width="10" height="10" viewBox="0 0 10 10"><path d="M1.500 5l2 2.500 4.500-6" stroke="#111" stroke-width="1.200" fill="none"/></svg>
<div class="a" style="left:61px;top:150px;width:13px;height:13px;background:#fff;border:1px solid #555;border-radius:7px;box-shadow:1px 1px 0 #eef2f3"></div>
<div class="a" style="left:65px;top:154px;width:5px;height:5px;background:#111;border-radius:3px"></div>
<!-- SECTION:MENUBUILDER -->
<div class="a win" style="left:0;top:171px;width:503px;height:472px;border-radius:0 0 6px 0;border-right:1px solid #8f9ba1;border-bottom:1px solid #8f9ba1;border-top:1px solid #e9edef"></div>
<div class="a" style="left:0;top:187px;width:502px;height:1px;background:#9aa6ac"></div>
<div class="a" style="left:0;top:188px;width:502px;height:1px;background:#eef2f3"></div>
<svg class="a" style="left:2px;top:174px" width="14" height="10" viewBox="0 0 14 10"><path d="M1.500 2l5.200 5.200 5.200-5.200" stroke="#8597a1" stroke-width="2.600" fill="none"/></svg>
<div class="a" style="left:19px;top:173px;width:2px;height:11px;background:#f6f8f9;border-left:1px solid #9aa6ac"></div>
<div class="t dj" style="left:27px;top:170px;font-weight:bold;font-size:12px;line-height:19px;color:#8ea3b0;letter-spacing:.08px">Menu Builder: mnuPopUp (Stack: "Untitled 1")</div>
<div class="a" style="left:461px;top:173px;width:2px;height:11px;background:#f6f8f9;border-left:1px solid #9aa6ac"></div>
<div class="a" style="left:468px;top:180px;width:10px;height:4px;background:#8597a1;border-radius:2px"></div>
<svg class="a" style="left:483.500px;top:173.500px" width="11" height="11" viewBox="0 0 11 11"><path d="M2 2l7 7M9 2l-7 7" stroke="#8597a1" stroke-width="3" stroke-linecap="round" fill="none"/></svg>
<!-- preview bar -->
<div class="a" style="left:1px;top:191px;width:490px;height:19px;background:#ccd4da;border-top:1px solid #f8fafa;border-left:1px solid #f8fafa;border-right:1px solid #111;border-bottom:1px solid #111"></div>
<div class="a" style="left:157px;top:191px;width:2px;height:18px;background:#f8fafa"></div>
<div class="a" style="left:156px;top:192px;width:1px;height:17px;background:#b5bfc4"></div>
<div class="t" style="left:6px;top:191px;line-height:14px;letter-spacing:.08px">Preview ("stPopUp" Menu)</div>
<!-- Menu Bar group -->
<div class="grp" style="left:31px;top:218px;width:438px;height:76px"></div>
<div class="lbl" style="left:39px;top:211px">Menu Bar:</div>
<div class="fld" style="left:40px;top:239px;width:169px;height:19px"></div>
<div class="t" style="left:47px;top:240px;height:16px;line-height:16px;background:#27587f;color:#fff;letter-spacing:.2px">mnuPopUp</div>
<div class="a" style="left:221px;top:241px;width:14px;height:14px;background:#fff;border-left:1px solid #111"></div>
<div class="t" style="left:239px;top:241px;line-height:14px;letter-spacing:.03px">Set as stack Menu bar</div>
<div class="btn" style="left:39px;top:267px;width:80px;height:20px">New...</div>
<div class="btn" style="left:129px;top:267px;width:80px;height:20px">Delete</div>
<div class="btn" style="left:219px;top:267px;width:80px;height:20px">Edit...</div>
<div class="btn" style="left:322px;top:267px;width:140px;height:20px">Edit Menu Bar Script</div>
<!-- Menus group -->
<div class="grp" style="left:8px;top:305px;width:238px;height:311px"></div>
<div class="lbl" style="left:16px;top:298px">Menus:</div>
<div class="btn" style="left:16px;top:324px;width:80px;height:20px">New Menu</div>
<div class="btn" style="left:106px;top:324px;width:80px;height:20px">Delete Menu</div>
<div class="fld" style="left:16px;top:349px;width:116px;height:19px"></div>
<div class="t" style="left:24px;top:352px;line-height:14px;letter-spacing:.2px">stPopUp</div>
<svg class="a" style="left:139px;top:350px" width="18" height="17" viewBox="0 0 18 17"><path d="M9 1l7 7.500h-4.700v7.500h-4.600v-7.500h-4.700z" fill="#9aa4a9"/></svg>
<svg class="a" style="left:166px;top:350px" width="18" height="17" viewBox="0 0 18 17"><path d="M9 16l7-7.500h-4.700v-7.500h-4.600v7.500h-4.700z" fill="#9aa4a9"/></svg>
<div class="fld" style="left:17px;top:374px;width:170px;height:113px"></div>
<div class="a" style="left:19px;top:377px;width:151px;height:15px;background:#27587f"></div>
<div class="t" style="left:24px;top:378px;line-height:14px;color:#fff;font-size:11px">stPopUp</div>
<!-- menus list scrollbar -->
<div class="a" style="left:170px;top:374px;width:1px;height:111px;background:#7d8e98"></div>
<div class="a" style="left:171px;top:374px;width:13px;height:1px;background:#7d8e98"></div>
<div class="a" style="left:171px;top:375px;width:13px;height:110px;background:#b4c0c7"></div>
<div class="a" style="left:184px;top:374px;width:2px;height:112px;background:#fbfcfc"></div>
<div class="a" style="left:171px;top:375px;width:13px;height:13px;background:#ccd4da;border:1px solid #fbfcfc;border-right-color:#7d8e98;border-bottom-color:#7d8e98"></div>
<div class="a" style="left:171px;top:389px;width:13px;height:82px;background:#b4c0c7;border:1px solid #fbfcfc;border-top-color:#8a9aa3;border-right-color:#7d8e98;border-bottom-color:#7d8e98;box-shadow:inset 0 1px 0 #fbfcfc"></div>
<div class="a" style="left:171px;top:471px;width:13px;height:13px;background:#ccd4da;border:1px solid #fbfcfc;border-right-color:#7d8e98;border-bottom-color:#7d8e98"></div>
<svg class="a" style="left:174px;top:378px" width="7" height="6" viewBox="0 0 7 6"><path d="M3.500 .8l3 3.400h-6z" fill="#8a9aa3"/><path d="M1.200 5h5" stroke="#fbfcfc" stroke-width="1"/></svg>
<svg class="a" style="left:174px;top:474px" width="7" height="6" viewBox="0 0 7 6"><path d="M3.500 4.800l3-3.600h-6z" fill="#8a9aa3"/><path d="M3.800 4.800l2.800-3.300" stroke="#fbfcfc" stroke-width="1"/></svg>
<div class="a" style="left:22px;top:392px;width:151px;height:3px;background:#f6965f"></div>
<svg class="a" style="left:20px;top:389px" width="7" height="9" viewBox="0 0 7 9"><path d="M.8 .8l5 3.700-5 3.700z" fill="#f09464" stroke="#222" stroke-width=".9"/></svg>
<svg class="a" style="left:174px;top:389px" width="6" height="9" viewBox="0 0 6 9"><path d="M5.200 .8l-4.200 3.700 4.200 3.700" fill="#f6965f" stroke="#111" stroke-width=".9"/></svg>
<!-- disabled / mnemonic left -->
<div class="a" style="left:18px;top:494px;width:13px;height:13px;background:#fff;border-left:1px solid #111"></div>
<div class="t" style="left:36px;top:493px;line-height:14px;letter-spacing:.2px">Disabled</div>
<div class="a" style="left:18px;top:516px;width:1px;height:13px;background:#8f9a9f"></div>
<div class="t dis" style="left:36px;top:515px;line-height:14px;letter-spacing:.2px">Mnemonic</div>
<div class="opt" style="left:103px;top:514px;width:45px;height:17px"></div>
<div class="a" style="left:125px;top:518px;width:3px;height:7px;background:#f1f4f5;border-right:1px solid #59646a;border-bottom:1px solid #59646a"></div><svg class="a" style="left:132px;top:515px" width="10" height="14" viewBox="0 0 10 14"><path d="M5 .8l3.900 4.900h-7.800z" fill="#eef2f3" stroke="#a0abb0" stroke-width=".6"/><path d="M5 12.800l3.900-4.900h-7.800z" fill="#b9c4c9" stroke="#737f85" stroke-width=".7"/><path d="M5 12.800l3.900-4.900" stroke="#f1f4f5" stroke-width=".9"/></svg>
<div class="btn" style="left:16px;top:571px;width:80px;height:20px">Edit Script</div>
<div class="btn dj" style="left:106px;top:571px;width:80px;height:20px;font-size:11.500px;line-height:18px">Auto Script</div>
<!-- Menu Items group -->
<div class="grp" style="left:253px;top:305px;width:238px;height:311px"></div>
<div class="lbl" style="left:261px;top:298px">Menu Items:</div>
<div class="btn" style="left:264px;top:324px;width:80px;height:20px">New Item</div>
<div class="btn dis" style="left:353px;top:324px;width:80px;height:20px">Delete Item</div>
<svg class="a" style="left:455px;top:323px" width="17" height="18" viewBox="455 323 17 18"><g fill="none" stroke="#444" stroke-width="1" stroke-dasharray="1 1" shape-rendering="crispEdges"><rect x="456.500" y="324.500" width="14" height="4"/><rect x="456.500" y="335.500" width="14" height="4"/></g><rect x="456" y="331" width="15" height="2" fill="#666"/></svg>
<svg class="a" style="left:374px;top:349px" width="100" height="18" viewBox="374 349 100 18"><g fill="#9aa4a9"><rect x="375" y="350" width="16" height="2"/><rect x="382" y="356" width="9" height="2"/><rect x="375" y="362" width="16" height="2"/><path d="M375 357l4.500-3.500v7z"/>
<rect x="402" y="350" width="16" height="2"/><rect x="409" y="356" width="9" height="2"/><rect x="402" y="362" width="16" height="2"/><path d="M406.500 357l-4.500-3.500v7z"/>
<path d="M437 350.500l7.500 8h-5.200v7.500h-4.600v-7.500h-5.200z"/><path d="M464 366l7.500-8h-5.200v-7.500h-4.600v7.500h-5.200z"/></g></svg>
<div class="fld" style="left:265px;top:349px;width:103px;height:19px;background:#ccd4da"></div>
<div class="fld" style="left:265px;top:374px;width:197px;height:112px"></div>
<div class="a" style="left:266px;top:374px;width:195px;height:111px;overflow:hidden">
<div class="t" style="left:24px;top:3px;line-height:16px;font-size:11px">Edit Script<br>(Edit Behavior Script<br>Property Inspector<br>-<br>Cut<br>Copy<br>Paste Text</div>
</div>
<div class="a" style="left:268px;top:375px;width:190px;height:3px;background:#f09464;border-top:1px solid #222"></div>
<svg class="a" style="left:265px;top:372px" width="8" height="10" viewBox="0 0 8 10"><path d="M.8 .8l5.700 4.200-5.700 4.200z" fill="#f09464" stroke="#222" stroke-width=".9"/></svg>
<svg class="a" style="left:453px;top:372px" width="8" height="10" viewBox="0 0 8 10"><path d="M7.200 .8l-5.700 4.200 5.700 4.200" fill="#f09464" stroke="#222" stroke-width=".9"/></svg>
<!-- items scrollbar -->
<div class="a" style="left:461px;top:374px;width:1px;height:111px;background:#7d8e98"></div>
<div class="a" style="left:462px;top:374px;width:13px;height:1px;background:#7d8e98"></div>
<div class="a" style="left:462px;top:375px;width:13px;height:110px;background:#9eadb4"></div>
<div class="a" style="left:475px;top:374px;width:1px;height:112px;background:#e9edef"></div>
<div class="a" style="left:462px;top:375px;width:13px;height:13px;background:#b4c0c7;border:1px solid #fbfcfc;border-right-color:#7d8e98;border-bottom-color:#7d8e98"></div>
<div class="a" style="left:462px;top:388px;width:13px;height:1px;background:#b4c0c7"></div>
<div class="a" style="left:462px;top:389px;width:13px;height:43px;background:#b4c0c7;border:1px solid #fbfcfc;border-top-color:#8a9aa3;border-right-color:#7d8e98;border-bottom-color:#7d8e98;box-shadow:inset 0 1px 0 #fbfcfc"></div>
<div class="a" style="left:462px;top:471px;width:13px;height:13px;background:#b4c0c7;border:1px solid #fbfcfc;border-right-color:#7d8e98;border-bottom-color:#7d8e98"></div>
<svg class="a" style="left:465px;top:378px" width="6" height="5" viewBox="0 0 6 5"><path d="M3 .6l3 3.700h-6z" fill="#111"/></svg>
<svg class="a" style="left:465px;top:475px" width="6" height="5" viewBox="0 0 6 5"><path d="M3 4.400l3-3.700h-6z" fill="#111"/></svg>
<!-- right props -->
<div class="a" style="left:258px;top:497px;width:1px;height:12px;background:#8f9a9f"></div>
<div class="t dis" style="left:276px;top:495px;line-height:14px;letter-spacing:.2px">Disabled</div>
<div class="a" style="left:258px;top:518px;width:1px;height:13px;background:#8f9a9f"></div>
<div class="t dis" style="left:276px;top:517px;line-height:14px;letter-spacing:.2px">Mnemonic</div>
<div class="opt" style="left:342px;top:516px;width:45px;height:17px"></div>
<div class="t" style="left:286px;top:543px;line-height:14px;color:#7b8083;letter-spacing:.2px">Mark:</div>
<div class="opt" style="left:351px;top:540px;width:118px;height:17px"></div>
<div class="t dis" style="left:355px;top:541px;line-height:14px;letter-spacing:.2px">None</div>
<div class="a" style="left:364px;top:520px;width:3px;height:7px;background:#f1f4f5;border-right:1px solid #59646a;border-bottom:1px solid #59646a"></div><svg class="a" style="left:371px;top:517px" width="10" height="14" viewBox="0 0 10 14"><path d="M5 .8l3.900 4.900h-7.800z" fill="#eef2f3" stroke="#a0abb0" stroke-width=".6"/><path d="M5 12.800l3.900-4.900h-7.800z" fill="#b9c4c9" stroke="#737f85" stroke-width=".7"/><path d="M5 12.800l3.900-4.900" stroke="#f1f4f5" stroke-width=".9"/></svg>
<div class="a" style="left:446px;top:544px;width:3px;height:7px;background:#f1f4f5;border-right:1px solid #59646a;border-bottom:1px solid #59646a"></div><svg class="a" style="left:453px;top:541px" width="10" height="14" viewBox="0 0 10 14"><path d="M5 .8l3.900 4.900h-7.800z" fill="#eef2f3" stroke="#a0abb0" stroke-width=".6"/><path d="M5 12.800l3.900-4.900h-7.800z" fill="#b9c4c9" stroke="#737f85" stroke-width=".7"/><path d="M5 12.800l3.900-4.900" stroke="#f1f4f5" stroke-width=".9"/></svg>
<div class="a" style="left:258px;top:569px;width:1px;height:13px;background:#8f9a9f"></div>
<div class="t dis" style="left:276px;top:569px;line-height:14px;letter-spacing:.2px">Shortcut</div>
<div class="t" style="left:434px;top:571px;line-height:14px;color:#7f8a8f;font-size:11px">+</div>
<div class="fld" style="left:451px;top:567px;width:32px;height:19px;background:#ccd4da"></div>
<div class="a" style="left:266px;top:595px;width:1px;height:13px;background:#8f9a9f"></div>
<div class="t dis" style="left:284px;top:594px;line-height:14px;font-size:11px">Ctrl</div>
<div class="a" style="left:318px;top:595px;width:1px;height:13px;background:#8f9a9f"></div>
<div class="t dis" style="left:336px;top:594px;line-height:14px;font-size:11px">Cmd</div>
<div class="a" style="left:370px;top:595px;width:1px;height:13px;background:#8f9a9f"></div>
<div class="t dis" style="left:388px;top:593px;line-height:14px;font-size:12px">Shift</div>
<div class="a" style="left:422px;top:595px;width:1px;height:13px;background:#8f9a9f"></div>
<div class="t dis" style="left:440px;top:594px;line-height:14px;font-size:11px">Alt</div>
<!-- SECTION:UNTITLED -->
<div class="a win" style="left:497px;top:90px;width:412px;height:426px;border-radius:9px 9px 7px 7px;border:1px solid #8f9ba1;border-top:none;border-left-color:#f4f7f8"></div>
<div class="a" style="left:497px;top:90px;width:412px;height:18px;background:#27587f;border-radius:9px 9px 0 0"></div>
<div class="a" style="left:497px;top:107px;width:412px;height:1px;background:#1b3c5a"></div>
<div class="a" style="left:498px;top:108px;width:410px;height:1px;background:#fcfdfd"></div>
<svg class="a" style="left:504px;top:94px" width="14" height="11" viewBox="0 0 14 11"><path d="M1.800 2.500l5.200 5.200 5.200-5.200" stroke="#fff" stroke-width="2.700" fill="none"/></svg>
<div class="a" style="left:521px;top:93px;width:2px;height:12px;background:#1c4568;border-right:1px solid #3f719b"></div>
<div class="t dj" style="left:529px;top:90px;font-weight:bold;font-size:12px;line-height:18px;color:#fff;letter-spacing:.05px">Untitled 1 *</div>
<div class="a" style="left:850px;top:93px;width:2px;height:12px;background:#1c4568;border-right:1px solid #3f719b"></div>
<div class="a" style="left:858px;top:100px;width:10px;height:4px;background:#fff;border-radius:2px"></div>
<div class="a" style="left:874px;top:94px;width:11px;height:11px;border:2px solid #fff;border-top-width:3px;border-radius:2px"></div>
<svg class="a" style="left:889px;top:94px" width="12" height="12" viewBox="0 0 12 12"><path d="M1.700 1.700l8.600 8.600M10.300 1.700l-8.600 8.600" stroke="#fff" stroke-width="2.900" fill="none"/></svg>
<!-- popup menu -->
<div class="a" style="left:618px;top:140px;width:130px;height:175px;background:#ccd5d9;border-top:1px solid #f4f7f8;border-left:1px solid #f4f7f8;border-right:1px solid #111;border-bottom:1px solid #111"></div>
<div class="a" style="left:619px;top:271px;width:128px;height:22px;background:#d4dbdf"></div>
<div class="t" style="left:623px;top:143px;line-height:14px;letter-spacing:.1px">Edit Script</div>
<div class="t dis" style="left:623px;top:163px;line-height:14px;letter-spacing:.1px">Edit Behavior Script</div>
<div class="t" style="left:623px;top:183px;line-height:14px;letter-spacing:.04px">Property Inspector</div>
<div class="a" style="left:620px;top:203px;width:126px;height:1px;background:#8f9a9f"></div><div class="a" style="left:620px;top:204px;width:126px;height:1px;background:#f4f7f8"></div>
<div class="t" style="left:623px;top:209px;line-height:14px;letter-spacing:.1px">Cut</div>
<div class="t" style="left:623px;top:229px;line-height:14px;letter-spacing:.1px">Copy</div>
<div class="t" style="left:623px;top:249px;line-height:14px;letter-spacing:.1px">Paste Text</div>
<div class="a" style="left:620px;top:269px;width:122px;height:1px;background:#8f9a9f"></div><div class="a" style="left:620px;top:270px;width:122px;height:1px;background:#f4f7f8"></div>
<div class="t" style="left:623px;top:275px;line-height:14px;color:#f6f8f9;letter-spacing:.1px">Card</div>
<div class="t" style="left:623px;top:295px;line-height:14px;letter-spacing:.1px">Stack</div>
<svg class="a" style="left:732px;top:278px" width="6" height="10" viewBox="0 0 6 10"><path d="M1 .5l4.500 4.500-4.500 4.500z" fill="#f6f8f9"/></svg>
<svg class="a" style="left:732px;top:298px" width="6" height="10" viewBox="0 0 6 10"><path d="M1 .5l4.500 4.500-4.500 4.500z" fill="#111"/></svg>
<!-- submenu -->
<div class="a" style="left:743px;top:270px;width:108px;height:23px;background:#cfd7db;border-top:1px solid #f4f7f8;border-left:1px solid #f4f7f8;border-right:1px solid #111;border-bottom:1px solid #111"></div>
<div class="t" style="left:748px;top:273px;line-height:14px;color:#f6f8f9;letter-spacing:.08px">Edit Card Script</div>
<svg class="a" style="left:761px;top:284px" width="14" height="21" viewBox="0 0 14 21"><path d="M1.500 1.500v14.500l3.400-3.200 2.500 5.800 2.300-1-2.500-5.600h4.600z" fill="#fff" stroke="#111" stroke-width="1.100" stroke-linejoin="round"/></svg>
</div></body></html>
